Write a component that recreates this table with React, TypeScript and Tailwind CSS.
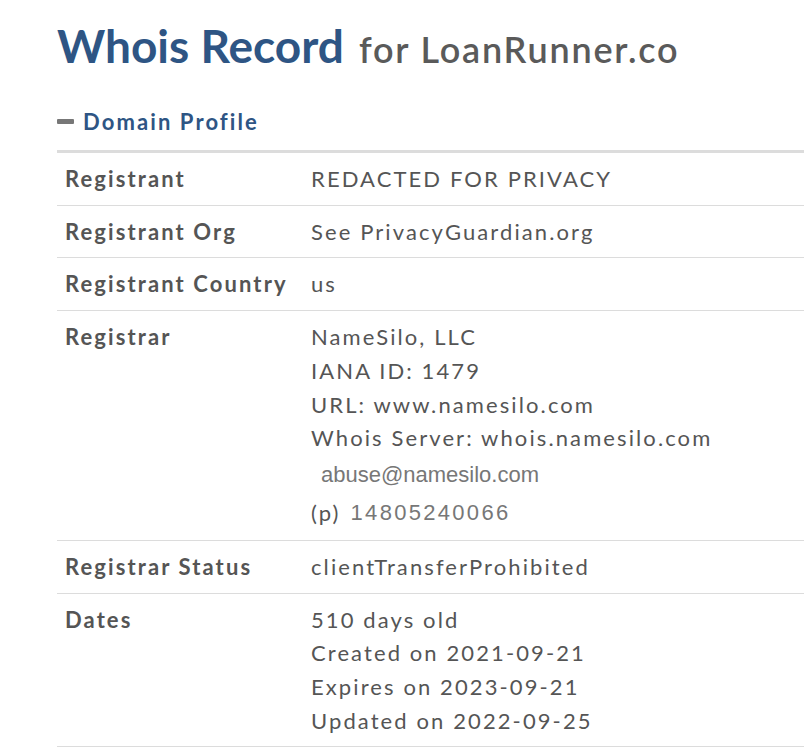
import React from "react"

type Row = {
  label: string
  lines: React.ReactNode[]
}

const rows: Row[] = [
  { label: "Registrant", lines: ["REDACTED FOR PRIVACY"] },
  { label: "Registrant Org", lines: ["See PrivacyGuardian.org"] },
  { label: "Registrant Country", lines: ["us"] },
  {
    label: "Registrar",
    lines: [
      "NameSilo, LLC",
      "IANA ID: 1479",
      "URL: www.namesilo.com",
      "Whois Server: whois.namesilo.com",
    ],
  },
  { label: "Registrar Status", lines: ["clientTransferProhibited"] },
  {
    label: "Dates",
    lines: ["510 days old", "Created on 2021-09-21", "Expires on 2023-09-21", "Updated on 2022-09-25"],
  },
]

export default function App() {
  return (
    <div className="min-h-[754px] w-[804px] overflow-hidden bg-white font-['Lato',sans-serif]">
      <div className="pl-[57px] pt-[16px]">
        <h1 className="flex items-baseline gap-[15px] whitespace-nowrap">
          <span className="text-[46px] font-bold leading-[60px] text-[#2e5584]">Whois Record</span>
          <span className="text-[36px] font-semibold leading-[60px] tracking-[1.8px] text-[#5a5a5a]">
            for LoanRunner.co
          </span>
        </h1>

        <div className="mt-[26px] flex items-center gap-[9px]">
          <span className="block h-[5px] w-[17px] rounded-[1px] bg-[#777]" />
          <span className="text-[22px] font-bold tracking-[2.1px] text-[#2e5584]">Domain Profile</span>
        </div>

        <table className="mt-[12px] w-[760px] border-t-[3px] border-[#dcdcdc] text-[22px] text-[#555]">
          <tbody>
            {rows.map((r) => (
              <tr key={r.label} className="border-b border-[#dcdcdc] align-top">
                <td className="w-[246px] whitespace-nowrap py-[9px] pl-[8px] font-bold leading-[33.7px] tracking-[2.1px]">
                  {r.label}
                </td>
                <td className="whitespace-nowrap py-[9px] pl-[8px] leading-[33.7px] tracking-[2.1px]">
                  {r.lines.map((l, i) => (
                    <div key={i}>{l}</div>
                  ))}
                  {r.label === "Registrar" && (
                    <>
                      <div className="flex h-[40px] items-center pl-[10px] font-['Liberation_Sans',sans-serif] text-[22px] tracking-[0px] text-[#777]">
                        abuse@namesilo.com
                      </div>
                      <div className="flex h-[36px] items-center">
                        <span>(p)</span>
                        <span className="ml-[10px] font-['Liberation_Sans',sans-serif] text-[22px] tracking-[2.3px] text-[#777]">
                          14805240066
                        </span>
                      </div>
                    </>
                  )}
                </td>
              </tr>
            ))}
          </tbody>
        </table>
      </div>
    </div>
  )
}
